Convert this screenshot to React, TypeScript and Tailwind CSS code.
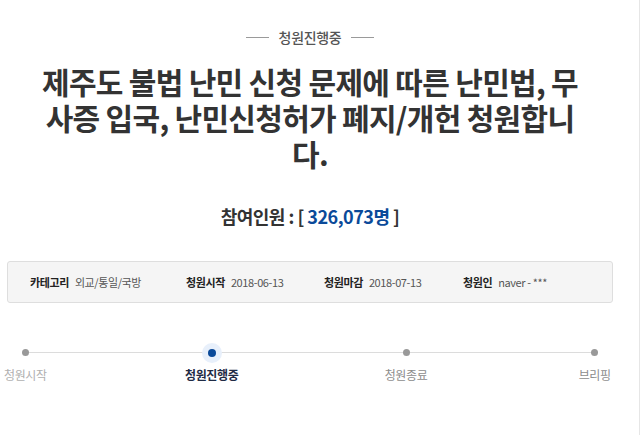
const steps = [
    { label: "청원시작", state: "done", ml: "" },
    { label: "청원진행중", state: "active", ml: "ml-[135px]" },
    { label: "청원종료", state: "todo", ml: "ml-[143px]" },
    { label: "브리핑", state: "todo", ml: "ml-[138px]" },
];

export default function App() {
    return (
        <div
            className="w-[640px] h-[435px] bg-white border-r border-[#e6e6e6] overflow-hidden"
            style={{ fontFamily: '"Noto Sans CJK KR", "Noto Sans", sans-serif' }}
        >
            <div className="w-[620px] pt-[27px]">
                <div className="flex items-center justify-center gap-[10px] h-[20px]">
                    <span className="w-[23px] h-px bg-[#9a9a9a]" />
                    <span className="text-[14px] leading-[20px] font-medium text-[#555] tracking-[-0.3px]">청원진행중</span>
                    <span className="w-[23px] h-px bg-[#9a9a9a]" />
                </div>

                <h1 className="mx-auto mt-[16px] w-[540px] text-center text-[30px] leading-[36px] font-bold text-[#333] tracking-[-0.7px]">
                    제주도 불법 난민 신청 문제에 따른 난민법, 무사증 입국, 난민신청허가 폐지/개헌 청원합니다.
                </h1>

                <p className="mt-[32px] text-center text-[18px] leading-[26px] font-bold text-[#333] tracking-[-0.5px]">
                    참여인원 : [ <span className="text-[#0b4a99]">326,073</span><span className="text-[#0b4a99]">명</span> ]
                </p>

                <div className="mt-[32px] ml-[7px] w-[606px] h-[42px] bg-[#f5f5f5] border border-[#dedede] rounded-[3px] flex items-center pl-[22px] text-[11px] tracking-[-0.4px]">
                    <div className="w-[156px] flex items-center gap-[6px]">
                        <b className="font-bold text-[#222]">카테고리</b>
                        <span className="text-[#555]">외교/통일/국방</span>
                    </div>
                    <div className="w-[138px] flex items-center gap-[6px]">
                        <b className="font-bold text-[#222]">청원시작</b>
                        <span className="text-[#555]">2018-06-13</span>
                    </div>
                    <div className="w-[139px] flex items-center gap-[6px]">
                        <b className="font-bold text-[#222]">청원마감</b>
                        <span className="text-[#555]">2018-07-13</span>
                    </div>
                    <div className="flex items-center gap-[6px]">
                        <b className="font-bold text-[#222]">청원인</b>
                        <span className="text-[#555]">naver - ***</span>
                    </div>
                </div>

                <div className="relative mt-[43px] h-[40px]">
                    <div className="absolute left-[26px] w-[572px] top-[6px] h-px bg-[#dcdcdc]" />
                    <div className="relative flex">
                        {steps.map((s) => (
                            <div key={s.label} className={`w-[52px] flex flex-col items-center ${s.ml}`}>
                                <div className="h-[13px] flex items-center justify-center">
                                    {s.state === "active" ? (
                                        <span className="w-[20px] h-[20px] rounded-full bg-[#e8f0fb] flex items-center justify-center">
                                            <span className="w-[8px] h-[8px] rounded-full bg-[#0b4a99]" />
                                        </span>
                                    ) : (
                                        <span className="w-[7px] h-[7px] rounded-full bg-[#999]" />
                                    )}
                                </div>
                                <span
                                    className={
                                        s.state === "active"
                                            ? "mt-[8px] whitespace-nowrap text-[12px] leading-[16px] font-bold text-[#1f2b45] tracking-[-0.4px]"
                                            : s.state === "done"
                                              ? "mt-[8px] whitespace-nowrap text-[12px] leading-[16px] text-[#b0b0b0] tracking-[-0.4px]"
                                              : "mt-[8px] whitespace-nowrap text-[12px] leading-[16px] text-[#8d8d8d] tracking-[-0.4px]"
                                    }
                                >
                                    {s.label}
                                </span>
                            </div>
                        ))}
                    </div>
                </div>
            </div>
        </div>
    );
}
